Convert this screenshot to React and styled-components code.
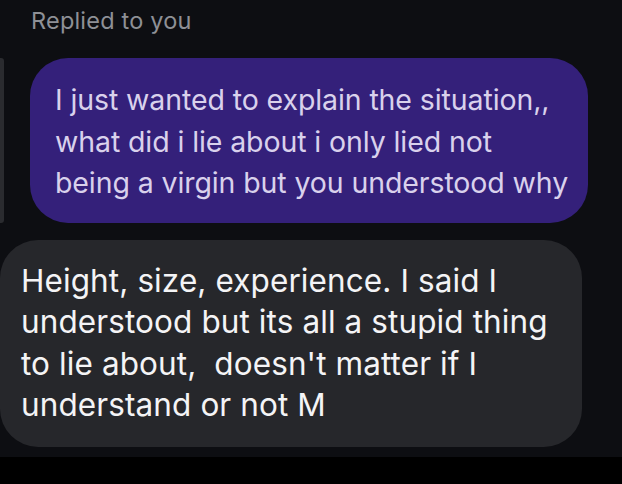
import React from "react";
import styled, { createGlobalStyle } from "styled-components";

const Global = createGlobalStyle`
  html, body {
    margin: 0;
    padding: 0;
    background: #0d0e12;
  }
  body {
    font-family: Inter, "Noto Sans", sans-serif;
    -webkit-font-smoothing: antialiased;
  }
`;

const Screen = styled.div`
  width: 622px;
  height: 484px;
  display: flex;
  flex-direction: column;
  background: #0d0e12;
  overflow: hidden;
`;

const Thread = styled.div`
  flex: 1;
  display: flex;
  flex-direction: column;
`;

const ReplyLabel = styled.div`
  padding: 6px 0 0 31px;
  height: 58px;
  box-sizing: border-box;
  font-size: 23.5px;
  line-height: 30px;
  color: #8e9096;
  letter-spacing: 0.2px;
`;

const QuoteRow = styled.div`
  display: flex;
  gap: 26px;
`;

const QuoteBar = styled.div`
  width: 4px;
  border-radius: 0 3px 3px 0;
  background: #2a2b2f;
`;

const Bubble = styled.div`
  width: ${(p) => p.w}px;
  box-sizing: border-box;
  border-radius: 38px;
  background: ${(p) => p.bg};
  color: ${(p) => p.fg};
  padding: ${(p) => p.pad};
  font-size: ${(p) => p.size}px;
  line-height: 41.5px;
  letter-spacing: ${(p) => p.ls}px;
  white-space: nowrap;
`;

const Received = styled.div`
  margin-top: 17px;
`;

const BottomBar = styled.div`
  height: 27px;
  background: #000;
`;

export default function App() {
  return (
    <Screen>
      <Global />
      <Thread>
        <ReplyLabel>Replied to you</ReplyLabel>
        <QuoteRow>
          <QuoteBar />
          <Bubble
            w={558}
            bg="#34207a"
            fg="#d9d1ec"
            size={28.5}
            ls={-0.1}
            pad="21px 20px 19px 25px"
          >
            I just wanted to explain the situation,,
            <br />
            what did i lie about i only lied not
            <br />
            being a virgin but you understood why
          </Bubble>
        </QuoteRow>
        <Received>
          <Bubble
            w={582}
            bg="#26272b"
            fg="#f4f4f6"
            size={31.5}
            ls={0.1}
            pad="20px 20px 21px 21px"
          >
            Height, size, experience. I said I
            <br />
            understood but its all a stupid thing
            <br />
            to lie about,&nbsp; doesn't matter if I
            <br />
            understand or not M
          </Bubble>
        </Received>
      </Thread>
      <BottomBar />
    </Screen>
  );
}
